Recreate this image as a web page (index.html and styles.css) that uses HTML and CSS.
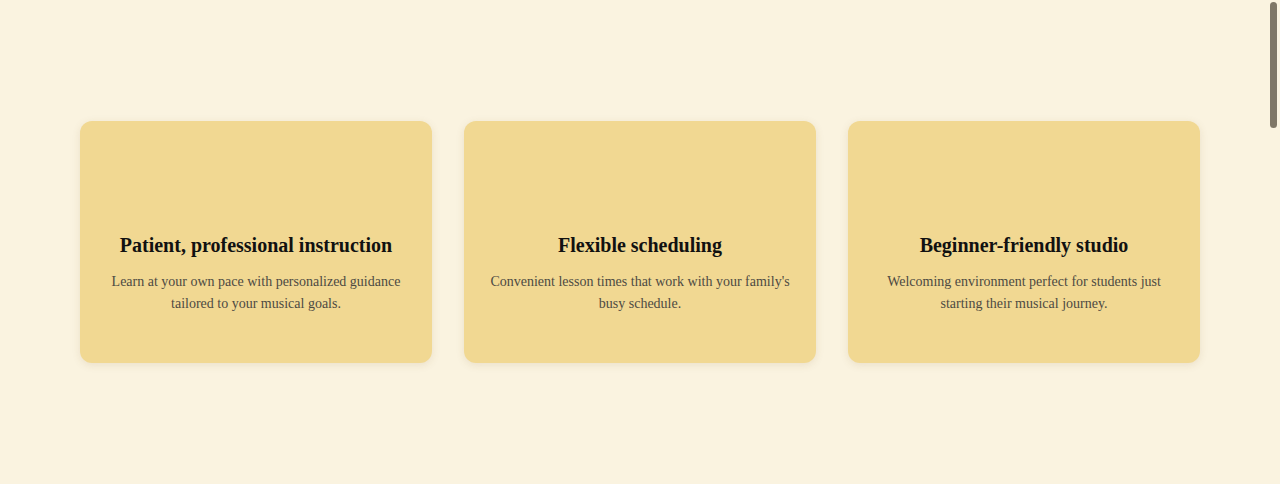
FILE: index.html
```html
<!DOCTYPE html>
<html lang="en">
<head>
<meta charset="utf-8">
<title>Features</title>
<link rel="stylesheet" href="styles.css">
</head>
<body>
<main class="section">
  <div class="cards">
    <article class="card">
      <div class="card-media"></div>
      <h3 class="card-title">Patient, professional instruction</h3>
      <p class="card-text">Learn at your own pace with personalized guidance tailored to your musical goals.</p>
    </article>
    <article class="card">
      <div class="card-media"></div>
      <h3 class="card-title">Flexible scheduling</h3>
      <p class="card-text">Convenient lesson times that work with your family's busy schedule.</p>
    </article>
    <article class="card">
      <div class="card-media"></div>
      <h3 class="card-title">Beginner-friendly studio</h3>
      <p class="card-text">Welcoming environment perfect for students just starting their musical journey.</p>
    </article>
  </div>
</main>
<div class="scroll-thumb"></div>
</body>
</html>
```

FILE: styles.css
```css
html, body {
  margin: 0;
  padding: 0;
}
body {
  background: #faf3e0;
  font-family: "Liberation Serif", "Times New Roman", serif;
  color: #111;
  overflow: hidden;
}
.section {
  min-height: 484px;
  display: flex;
  align-items: center;
  justify-content: center;
  padding: 0 80px;
  box-sizing: border-box;
}
.cards {
  flex: 1;
  display: grid;
  grid-template-columns: repeat(3, 1fr);
  gap: 32px;
}
.card {
  background: #f1d892;
  border-radius: 12px;
  box-shadow: 0 2px 8px rgba(120, 90, 30, 0.12);
  padding: 48px 24px 48px;
  text-align: center;
  display: flex;
  flex-direction: column;
  align-items: center;
}
.card-media {
  height: 40px;
  margin-bottom: 24px;
}
.card-title {
  margin: 0 0 14px;
  font-size: 20px;
  line-height: 24px;
  font-weight: 700;
  color: #111;
}
.card-text {
  margin: 0;
  font-size: 14px;
  line-height: 22px;
  color: #4d4a42;
}
.scroll-thumb {
  position: fixed;
  top: 2px;
  right: 3px;
  width: 7px;
  height: 126px;
  border-radius: 4px;
  background: #7f7767;
}
```
